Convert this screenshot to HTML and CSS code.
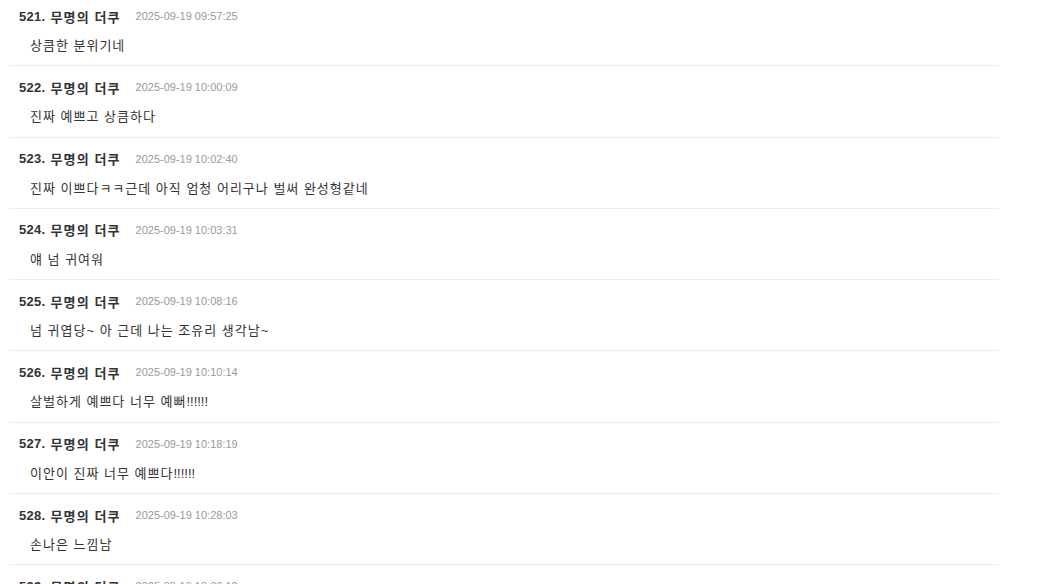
FILE: index.html
```html
<!DOCTYPE html>
<html lang="ko">
<head>
<meta charset="utf-8">
<link rel="stylesheet" href="styles.css">
</head>
<body>
<ul class="comments">
  <li class="comment">
    <div class="meta"><span class="num">521.</span><span class="name">무명의 더쿠</span><span class="date">2025-09-19 09:57:25</span></div>
    <div class="text">상큼한 분위기네</div>
  </li>
  <li class="comment">
    <div class="meta"><span class="num">522.</span><span class="name">무명의 더쿠</span><span class="date">2025-09-19 10:00:09</span></div>
    <div class="text">진짜 예쁘고 상큼하다</div>
  </li>
  <li class="comment">
    <div class="meta"><span class="num">523.</span><span class="name">무명의 더쿠</span><span class="date">2025-09-19 10:02:40</span></div>
    <div class="text">진짜 이쁘다ㅋㅋ근데 아직 엄청 어리구나 벌써 완성형같네</div>
  </li>
  <li class="comment">
    <div class="meta"><span class="num">524.</span><span class="name">무명의 더쿠</span><span class="date">2025-09-19 10:03:31</span></div>
    <div class="text">얘 넘 귀여워</div>
  </li>
  <li class="comment">
    <div class="meta"><span class="num">525.</span><span class="name">무명의 더쿠</span><span class="date">2025-09-19 10:08:16</span></div>
    <div class="text">넘 귀엽당~ 아 근데 나는 조유리 생각남~</div>
  </li>
  <li class="comment">
    <div class="meta"><span class="num">526.</span><span class="name">무명의 더쿠</span><span class="date">2025-09-19 10:10:14</span></div>
    <div class="text">살벌하게 예쁘다 너무 예뻐<span class="bang">!!!!!!</span></div>
  </li>
  <li class="comment">
    <div class="meta"><span class="num">527.</span><span class="name">무명의 더쿠</span><span class="date">2025-09-19 10:18:19</span></div>
    <div class="text">이안이 진짜 너무 예쁘다<span class="bang">!!!!!!</span></div>
  </li>
  <li class="comment">
    <div class="meta"><span class="num">528.</span><span class="name">무명의 더쿠</span><span class="date">2025-09-19 10:28:03</span></div>
    <div class="text">손나은 느낌남</div>
  </li>
  <li class="comment">
    <div class="meta"><span class="num">529.</span><span class="name">무명의 더쿠</span><span class="date">2025-09-19 10:30:12</span></div>
    <div class="text">예쁘다</div>
  </li>
</ul>
</body>
</html>
```

FILE: styles.css
```css
html, body {
  margin: 0;
  padding: 0;
  background: #fff;
}

body {
  font-family: "Liberation Sans", "Noto Sans CJK KR", sans-serif;
  color: #333;
  overflow: hidden;
}

.comments {
  list-style: none;
  margin: -5px 0 0 9px;
  padding: 0;
  width: 990px;
}

.comment {
  padding: 11px 10px 9.3px;
  border-bottom: 1px solid #ececec;
}

.meta {
  display: flex;
  align-items: center;
  height: 20px;
}

.num {
  font-size: 13px;
  font-weight: bold;
  color: #333;
  letter-spacing: 0.3px;
}

.name {
  margin-left: 5px;
  font-size: 13px;
  font-weight: bold;
  color: #333;
  letter-spacing: 1.1px;
}

.date {
  margin-left: 15px;
  font-size: 11px;
  color: #999;
}

.text {
  margin-top: 10px;
  padding-left: 11px;
  font-size: 13px;
  line-height: 20px;
  color: #333;
  letter-spacing: 1px;
}

.bang {
  letter-spacing: 0;
}
```
